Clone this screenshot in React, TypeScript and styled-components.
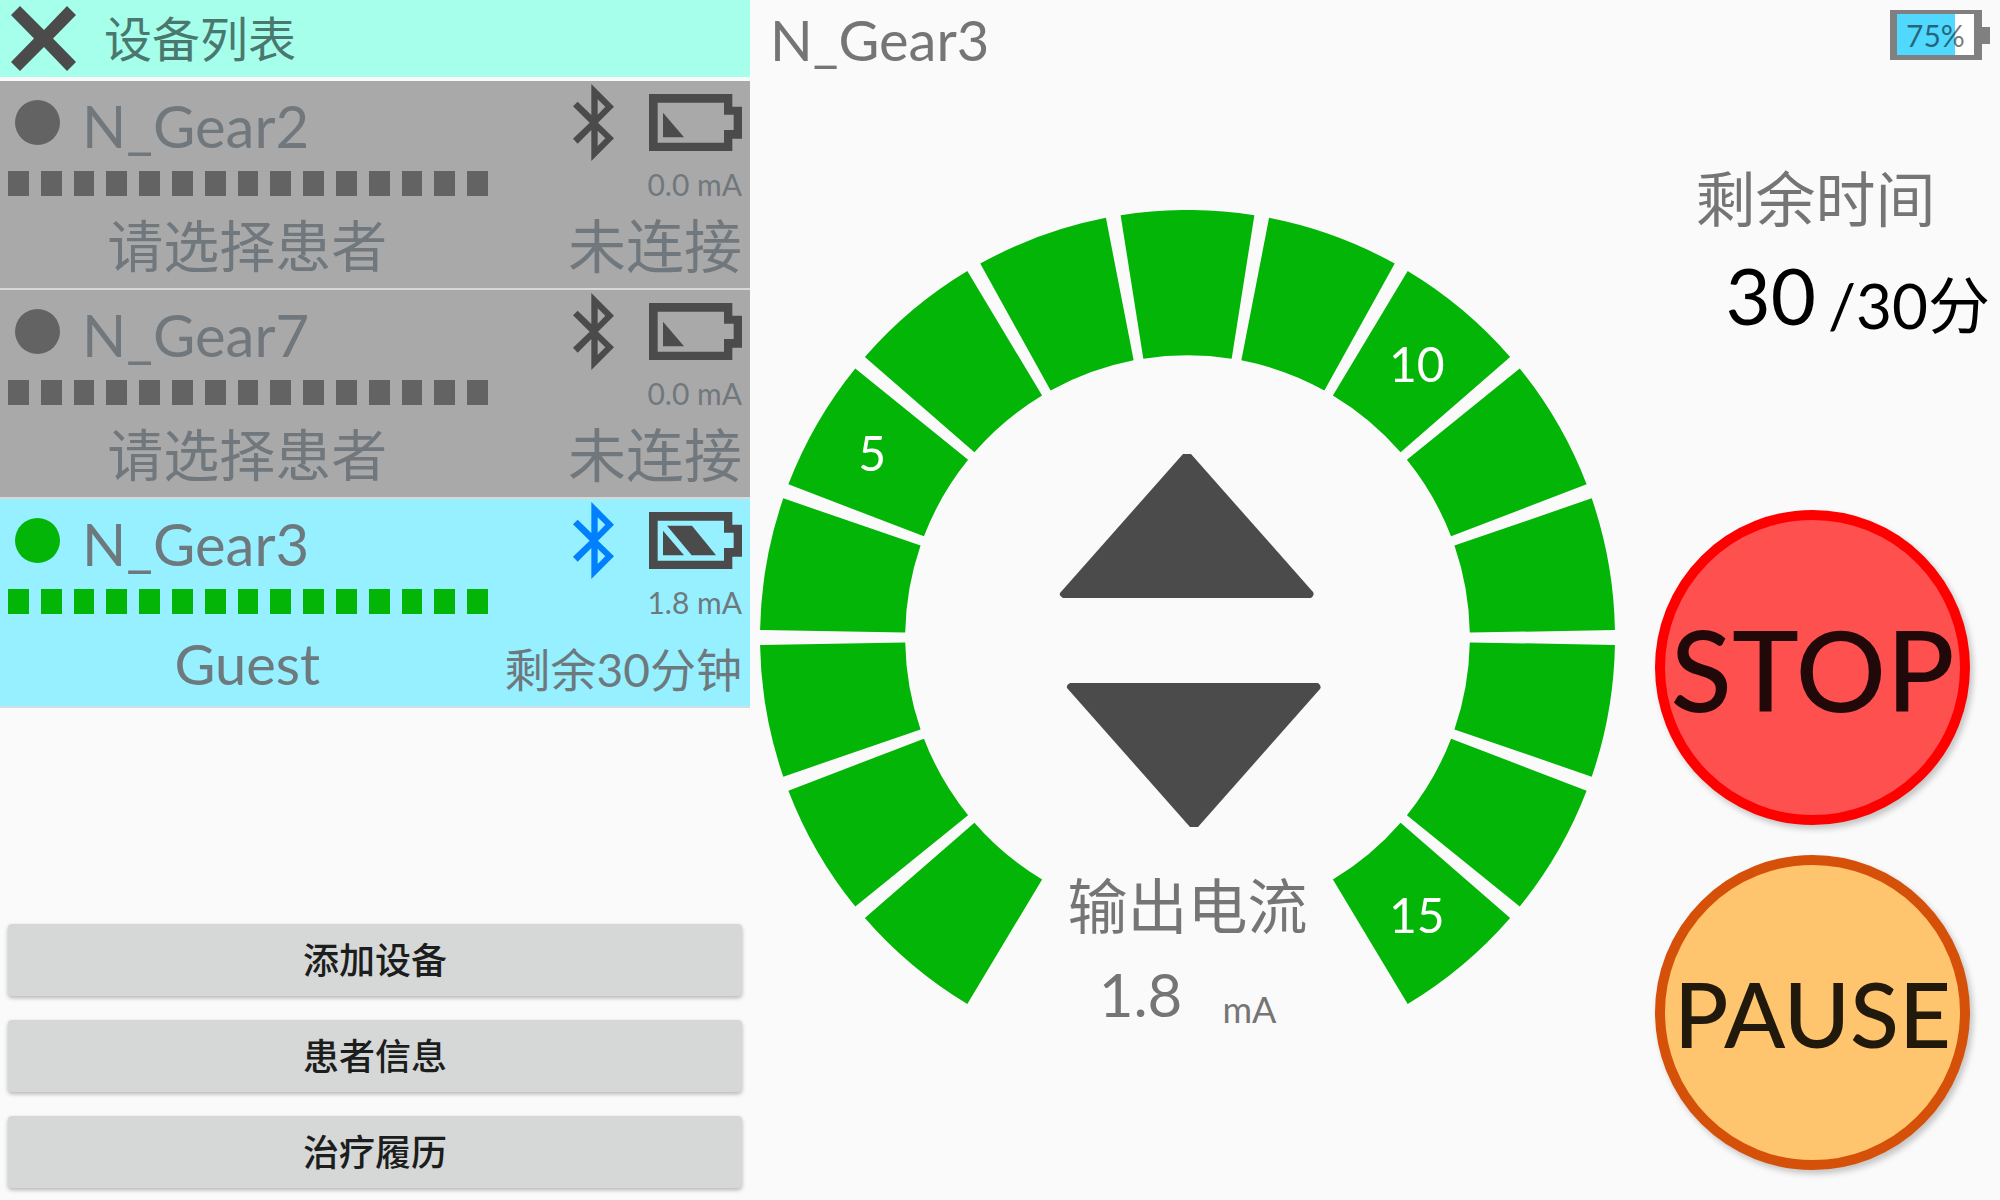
import React from "react";
import styled, { createGlobalStyle } from "styled-components";

const GlobalStyle = createGlobalStyle`
  *, *::before, *::after { box-sizing: border-box; }
  body {
    margin: 0;
    background: #fafafa;
    color: #757575;
    font-family: Lato, "Noto Sans CJK SC", sans-serif;
  }
  button {
    margin: 0;
    padding: 0;
    border: 0;
    background: none;
    font-family: inherit;
    cursor: pointer;
  }
  h1, h2, p, ul { margin: 0; padding: 0; font-weight: 400; }
  svg { display: block; }
`;

const Page = styled.div`
  display: grid;
  grid-template-columns: 3fr 5fr;
  min-height: 100vh;
`;

/* ---------- device list ---------- */

const Sidebar = styled.aside`
  display: flex;
  flex-direction: column;
  min-width: 0;
`;

const ListHeader = styled.header`
  display: flex;
  align-items: center;
  gap: 28px;
  height: 77px;
  padding-left: 11px;
  margin-bottom: 4px;
  background: #a6ffea;
  color: #4b786e;
`;

const ListTitle = styled.h1`
  font-size: 48px;
  line-height: 72px;
`;

const DeviceList = styled.ul`
  list-style: none;
`;

const DeviceRow = styled.li<{ $active: boolean }>`
  border-bottom: 2px solid ${(p) => (p.$active ? "#d0e0e2" : "#d8d8d8")};
  background: ${(p) => (p.$active ? "#96f0ff" : "#a9a9a9")};
  color: ${(p) => (p.$active ? "#6e797e" : "#70787e")};
`;

const NameLine = styled.div`
  display: flex;
  align-items: center;
  height: 82px;
  padding: 0 8px 0 15px;
`;

const Dot = styled.span<{ $active: boolean }>`
  width: 45px;
  height: 45px;
  margin-right: 22px;
  border-radius: 50%;
  background: ${(p) => (p.$active ? "#02b506" : "#636363")};
`;

const DeviceName = styled.h2`
  flex: 1;
  padding-top: 8px;
  font-size: 58px;
  line-height: 72px;
`;

const Icons = styled.div`
  display: flex;
  align-items: center;
  gap: 35px;
`;

const LevelLine = styled.div`
  display: flex;
  align-items: center;
  justify-content: space-between;
  height: 41px;
  padding: 0 8px;
`;

const Level = styled.div<{ $active: boolean }>`
  display: flex;
  gap: 12px;
  width: 480px;
  height: 25px;
  color: ${(p) => (p.$active ? "#02b506" : "#636363")};
`;

const LevelBlock = styled.span`
  flex: 1;
  background: currentColor;
`;

const Current = styled.span`
  font-size: 30px;
  line-height: 36px;
`;

const PatientLine = styled.div`
  display: grid;
  grid-template-columns: 2fr 1fr;
  align-items: center;
  height: 84px;
  padding-right: 8px;
`;

const Patient = styled.span`
  font-size: 56px;
  line-height: 72px;
  text-align: center;
`;

const Status = styled.span<{ $active: boolean }>`
  align-self: ${(p) => (p.$active ? "end" : "center")};
  justify-self: end;
  font-size: ${(p) => (p.$active ? "46px" : "58px")};
  line-height: 72px;
  white-space: nowrap;
`;

const Menu = styled.nav`
  display: flex;
  flex-direction: column;
  gap: 24px;
  margin-top: auto;
  padding: 24px 8px 12px;
`;

const MenuButton = styled.button`
  height: 72px;
  border-radius: 4px;
  background: #d6d8d7;
  box-shadow: 0 2px 4px rgba(0, 0, 0, 0.28);
  color: #1c1d1d;
  font-size: 36px;
  font-weight: 500;
  line-height: 48px;
`;

/* ---------- selected device ---------- */

const Detail = styled.main`
  display: grid;
  grid-template-columns: 7fr 3fr;
  grid-template-rows: 75px 1fr;
  min-width: 0;
`;

const DetailTitle = styled.h2`
  padding-left: 20px;
  font-size: 56px;
  line-height: 80px;
`;

const TabletBattery = styled.div`
  display: flex;
  align-items: center;
  justify-self: end;
  align-self: start;
  padding: 10px 10px 0 0;
`;

const BatteryCase = styled.div`
  width: 92px;
  height: 50px;
  padding: 4px 8px 5px 7px;
  background: #808080;
`;

const BatteryLevel = styled.div<{ $level: number }>`
  height: 100%;
  background: linear-gradient(
    to right,
    #50d8ff ${(p) => p.$level}%,
    #ffffff ${(p) => p.$level}%
  );
  color: rgba(0, 0, 0, 0.54);
  font-size: 30px;
  line-height: 42px;
  text-align: center;
`;

const BatteryTip = styled.div`
  width: 8px;
  height: 17px;
  background: #808080;
`;

const GaugeArea = styled.section`
  display: grid;
  align-content: center;
  padding: 0 10px;
`;

const Dial = styled.svg`
  grid-area: 1 / 1;
  width: 100%;
  height: auto;
`;

const DialLabel = styled.text`
  fill: #ffffff;
  font-size: 48px;
  text-anchor: middle;
`;

const DialContent = styled.div`
  grid-area: 1 / 1;
  justify-self: center;
  display: flex;
  flex-direction: column;
  align-items: center;
  padding-top: 244px;
`;

const ArrowButtons = styled.div`
  display: flex;
  flex-direction: column;
  gap: 85px;
`;

const OutputLabel = styled.p`
  margin-top: 43px;
  font-size: 60px;
  line-height: 72px;
`;

const OutputValue = styled.p`
  display: flex;
  align-items: flex-end;
  gap: 40px;
  margin-top: 16px;
  font-size: 60px;
  line-height: 72px;
`;

const Unit = styled.span`
  font-size: 36px;
  line-height: 42px;
`;

const Controls = styled.section`
  display: flex;
  flex-direction: column;
  padding: 88px 0 30px;
`;

const TimePanel = styled.div`
  display: flex;
  flex-direction: column;
  align-items: center;
  padding: 0 10px 0 16px;
`;

const TimeLabel = styled.p`
  font-size: 60px;
  line-height: 72px;
`;

const TimeValue = styled.p`
  display: flex;
  align-items: flex-end;
  align-self: flex-end;
  gap: 12px;
  margin-top: 12px;
  color: #000000;
  font-size: 78px;
  line-height: 96px;
`;

const TimeTotal = styled.span`
  font-size: 62px;
  line-height: 76px;
`;

const RoundButtons = styled.div`
  display: flex;
  flex-direction: column;
  gap: 30px;
  margin-top: auto;
  padding: 0 30px;
`;

const RoundButton = styled.button<{ $fill: string; $edge: string; $ink: string; $size: number }>`
  display: flex;
  align-items: center;
  justify-content: center;
  width: 100%;
  aspect-ratio: 1;
  border: 10px solid ${(p) => p.$edge};
  border-radius: 50%;
  background: ${(p) => p.$fill};
  box-shadow: 3px 4px 6px rgba(0, 0, 0, 0.22);
  color: ${(p) => p.$ink};
  font-size: ${(p) => p.$size}px;
  font-weight: 500;
  line-height: 120px;
`;

/* ---------- drawings ---------- */

const CloseIcon = () => (
  <svg width="65" height="65" viewBox="0 0 65 65" aria-hidden="true">
    <path
      fill="#4b4b4b"
      d="M9 0L33 24L56 0L65 9L42 32.500L65 56L56 65L33 41L9 65L0 56L23 32.500L0 9Z"
    />
  </svg>
);

const BluetoothIcon = ({ color }: { color: string }) => (
  <svg width="41" height="77" viewBox="0 0 123 231" aria-hidden="true">
    <path
      fill={color}
      fillRule="evenodd"
      d="M55 0L123 68L75 116L123 163L55 231V138L14 179L0 164L50 116L0 67L14 53L55 93ZM74 46V92L97 68ZM74 140V186L97 163Z"
    />
  </svg>
);

const BatteryIcon = ({ half }: { half: boolean }) => (
  <svg width="93" height="57" viewBox="0 0 279 171" aria-hidden="true">
    <path
      fill="#4b4b4b"
      fillRule="evenodd"
      d="M0 0H250V38H279V134H250V171H0ZM26 26V146H225V108H254V62H225V26Z"
    />
    <path fill="#4b4b4b" d="M42 56L105 130H42Z" />
    {half && <path fill="#4b4b4b" d="M54 41H129L201 130H128Z" />}
  </svg>
);

const UpIcon = () => (
  <svg width="266" height="144" viewBox="0 0 266 144" aria-hidden="true">
    <path fill="#4b4b4b" d="M128 0H136L258 138Q260 141 256 144H8Q4 142 5 139Z" />
  </svg>
);

const DownIcon = () => (
  <svg width="266" height="144" viewBox="0 0 266 144" aria-hidden="true">
    <path fill="#4b4b4b" d="M135 144H143L265 6Q267 3 263 0H15Q11 2 12 5Z" />
  </svg>
);

const OUTER = 427;
const INNER = 282;
const SEGMENTS = 15;

const point = (radius: number, degrees: number) => {
  const a = (degrees * Math.PI) / 180;
  return `${(OUTER + radius * Math.cos(a)).toFixed(2)} ${(OUTER + radius * Math.sin(a)).toFixed(2)}`;
};

const segmentPath = (index: number) => {
  const from = 121 + index * 20;
  const to = from + 18;
  return `M${point(OUTER, from)}A${OUTER} ${OUTER} 0 0 1 ${point(OUTER, to)}L${point(INNER, to)}A${INNER} ${INNER} 0 0 0 ${point(INNER, from)}Z`;
};

const labels = [
  { value: 5, x: 112, y: 261 },
  { value: 10, x: 656, y: 172 },
  { value: 15, x: 656, y: 722 },
];

const Gauge = () => (
  <Dial viewBox="0 0 854 854" role="img" aria-label="输出电流 15">
    {Array.from({ length: SEGMENTS }, (_, i) => (
      <path key={i} fill="#02b506" d={segmentPath(i)} />
    ))}
    {labels.map((l) => (
      <DialLabel key={l.value} x={l.x} y={l.y}>
        {l.value}
      </DialLabel>
    ))}
  </Dial>
);

/* ---------- data ---------- */

const devices = [
  { name: "N_Gear2", active: false, current: "0.0 mA", patient: "请选择患者", status: "未连接" },
  { name: "N_Gear7", active: false, current: "0.0 mA", patient: "请选择患者", status: "未连接" },
  { name: "N_Gear3", active: true, current: "1.8 mA", patient: "Guest", status: "剩余30分钟" },
];

const menu = ["添加设备", "患者信息", "治疗履历"];

export default function App() {
  return (
    <>
      <GlobalStyle />
      <Page>
        <Sidebar>
          <ListHeader>
            <button type="button" aria-label="关闭">
              <CloseIcon />
            </button>
            <ListTitle>设备列表</ListTitle>
          </ListHeader>
          <DeviceList>
            {devices.map((d) => (
              <DeviceRow key={d.name} $active={d.active}>
                <NameLine>
                  <Dot $active={d.active} />
                  <DeviceName>{d.name}</DeviceName>
                  <Icons>
                    <BluetoothIcon color={d.active ? "#0080ff" : "#4b4b4b"} />
                    <BatteryIcon half={d.active} />
                  </Icons>
                </NameLine>
                <LevelLine>
                  <Level $active={d.active}>
                    {Array.from({ length: SEGMENTS }, (_, i) => (
                      <LevelBlock key={i} />
                    ))}
                  </Level>
                  <Current>{d.current}</Current>
                </LevelLine>
                <PatientLine>
                  <Patient>{d.patient}</Patient>
                  <Status $active={d.active}>{d.status}</Status>
                </PatientLine>
              </DeviceRow>
            ))}
          </DeviceList>
          <Menu>
            {menu.map((m) => (
              <MenuButton key={m} type="button">
                {m}
              </MenuButton>
            ))}
          </Menu>
        </Sidebar>
        <Detail>
          <DetailTitle>N_Gear3</DetailTitle>
          <TabletBattery>
            <BatteryCase>
              <BatteryLevel $level={75}>75%</BatteryLevel>
            </BatteryCase>
            <BatteryTip />
          </TabletBattery>
          <GaugeArea>
            <Gauge />
            <DialContent>
              <ArrowButtons>
                <button type="button" aria-label="增加">
                  <UpIcon />
                </button>
                <button type="button" aria-label="减少">
                  <DownIcon />
                </button>
              </ArrowButtons>
              <OutputLabel>输出电流</OutputLabel>
              <OutputValue>
                1.8 <Unit>mA</Unit>
              </OutputValue>
            </DialContent>
          </GaugeArea>
          <Controls>
            <TimePanel>
              <TimeLabel>剩余时间</TimeLabel>
              <TimeValue>
                30 <TimeTotal>/30分</TimeTotal>
              </TimeValue>
            </TimePanel>
            <RoundButtons>
              <RoundButton type="button" $fill="#ff5050" $edge="#ff0000" $ink="#210909" $size={113}>
                STOP
              </RoundButton>
              <RoundButton type="button" $fill="#ffc56e" $edge="#d5510a" $ink="#21190c" $size={90}>
                PAUSE
              </RoundButton>
            </RoundButtons>
          </Controls>
        </Detail>
      </Page>
    </>
  );
}
